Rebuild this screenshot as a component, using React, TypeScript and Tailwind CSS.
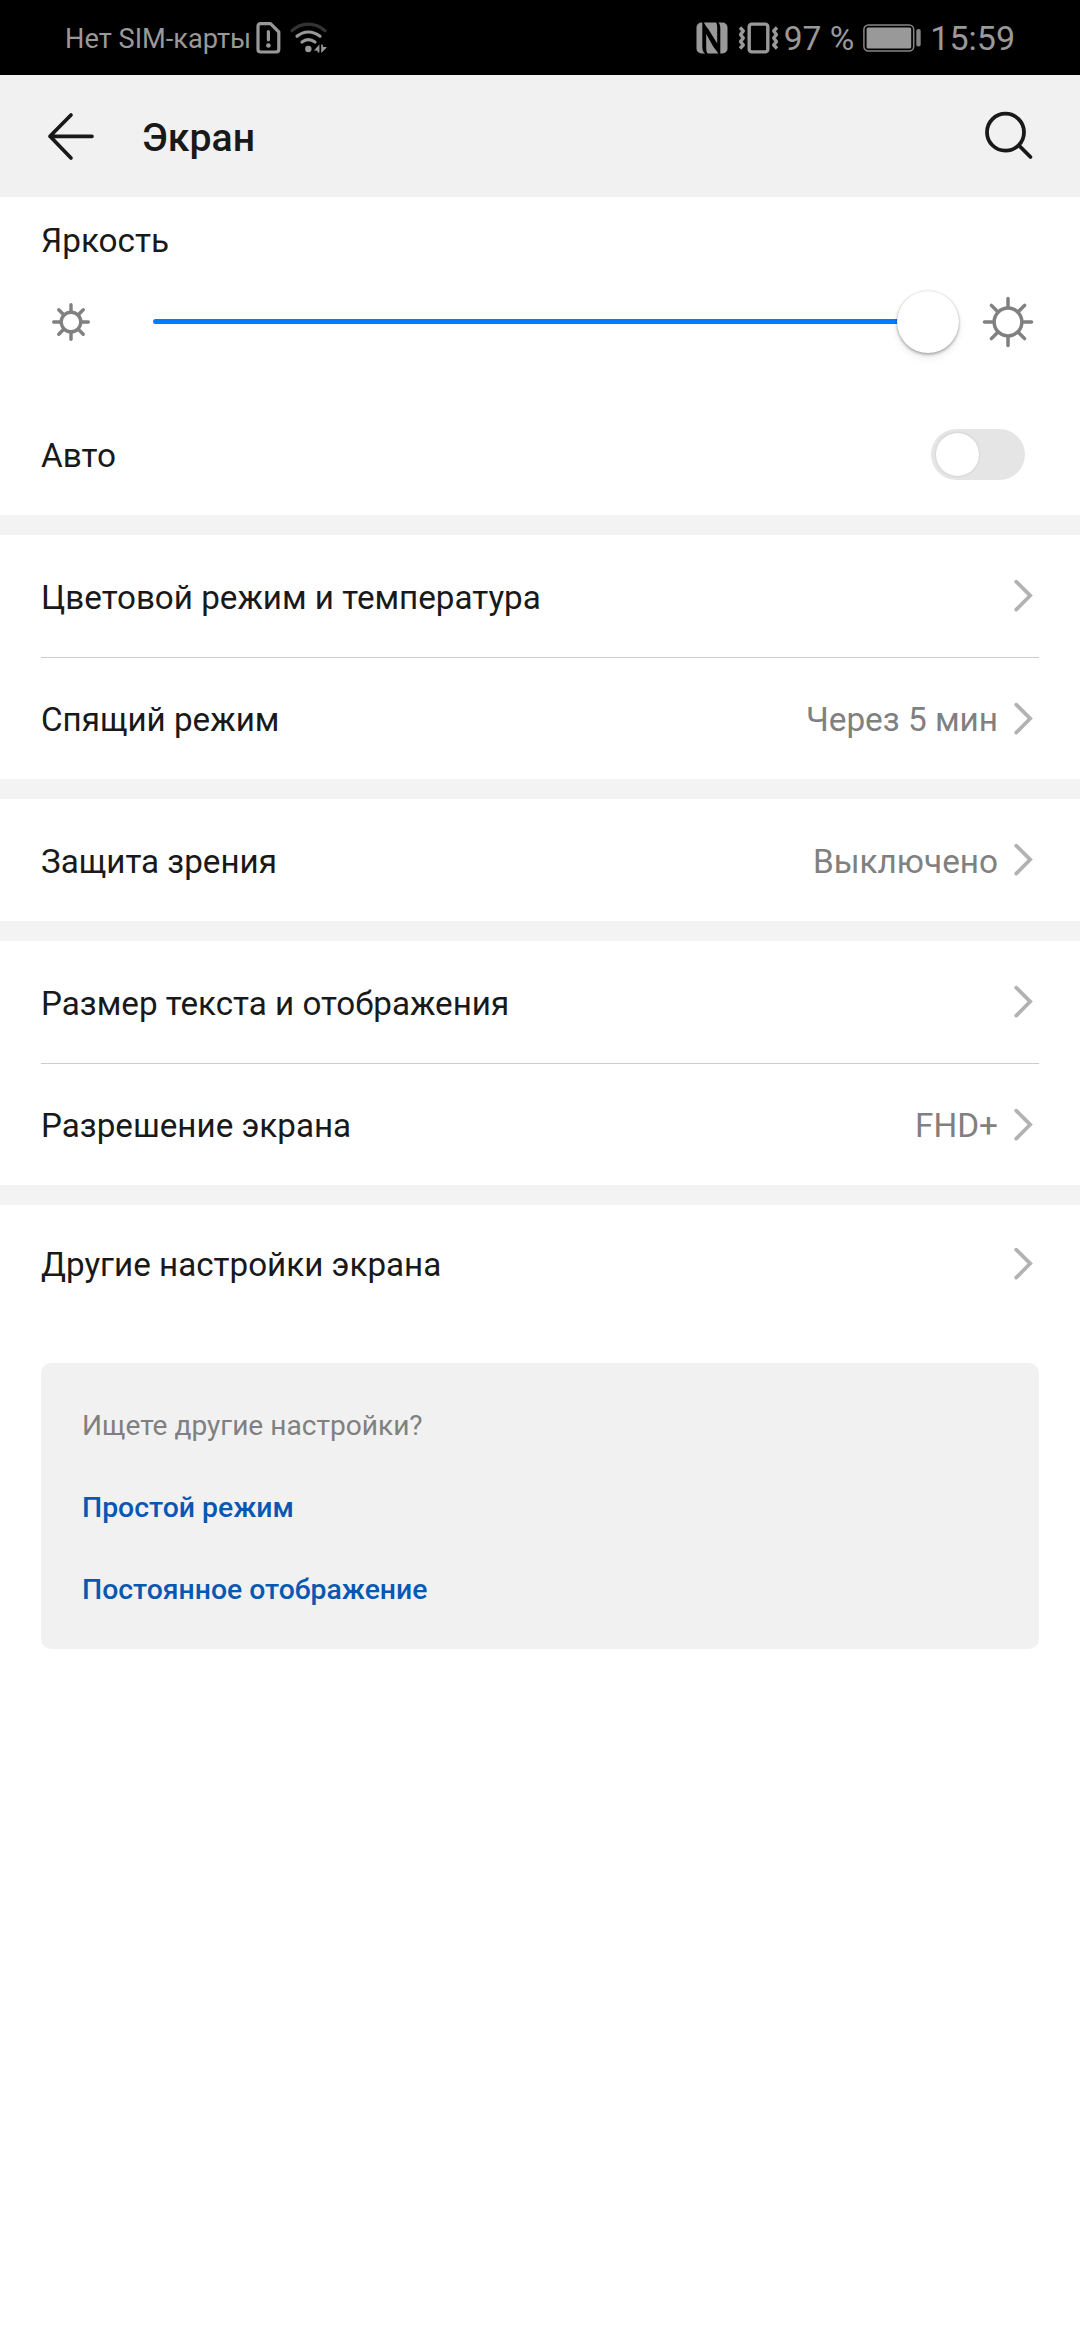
import { useState } from 'react';

interface SettingItem {
  title: string;
  value?: string;
}

interface SunProps {
  size: number;
  radius: number;
  rayStart: number;
  rayEnd: number;
  strokeWidth: number;
}

const groups: SettingItem[][] = [
  [{ title: 'Цветовой режим и температура' }, { title: 'Спящий режим', value: 'Через 5 мин' }],
  [{ title: 'Защита зрения', value: 'Выключено' }],
  [{ title: 'Размер текста и отображения' }, { title: 'Разрешение экрана', value: 'FHD+' }],
];

const links = ['Простой режим', 'Постоянное отображение'];

function SimIcon() {
  return (
    <svg width="26" height="32" viewBox="0 0 26 32" fill="none" stroke="#999" strokeLinecap="round">
      <path d="M4 1.7H14.5L22.8 10V27.3Q22.8 30 20.2 30H4.6Q2 30 2 27.3V4.3Q2 1.7 4.6 1.7Z" strokeWidth="3.2" strokeLinejoin="round" />
      <path d="M12.4 9.6V17.8" strokeWidth="3.2" />
      <circle cx="12.4" cy="23.5" r="2.3" fill="#999" stroke="none" />
    </svg>
  );
}

function WifiIcon() {
  return (
    <svg width="38" height="32" viewBox="0 0 38 32" fill="none" strokeWidth="3.2" strokeLinecap="round">
      <path d="M2 8.7Q9 2.2 18.3 2.2T35 8.7" stroke="#333" />
      <path d="M7 14.3Q12 10 18.3 10T30 14.3" stroke="#999" />
      <path d="M12 20Q15 17.6 18.3 17.6T25 20" stroke="#999" />
      <circle cx="18.3" cy="27" r="3.2" fill="#999" />
      <path d="M29.4 22.4V30.6H27.6V28.8L24 28.4Z" fill="#999" />
      <path d="M31.2 31V22.6H32.8V24.8L37 25.2Z" fill="#999" />
    </svg>
  );
}

function NfcIcon() {
  return (
    <svg width="32" height="32" viewBox="0 0 32 32">
      <rect x="0.5" y="0.5" width="31" height="31" rx="5" fill="#999" />
      <path d="M6.3 0L7.6 0C9 3 10.8 5 12.6 7.5L21.2 21.5V6C21.2 3.5 20.8 1.8 20 0H22.2C23.8 1.8 24.3 3.8 24.3 6.3V32H22.6C20.5 28.8 18.3 26.3 16.6 23.6L10.2 12V25.5C10.2 28 10.5 30 11.8 32H9.3C7.2 30 6.3 28 6.3 25Z" fill="#000" />
    </svg>
  );
}

function VibrateIcon() {
  return (
    <svg width="42" height="32" viewBox="0 0 42 32" fill="none" stroke="#999" strokeWidth="3.4" strokeLinejoin="round">
      <rect x="11.2" y="2.1" width="18.6" height="27.8" rx="2.5" />
      <path d="M2 5.5L5.3 9L2.6 12.6L5.3 16L2.6 19.6L5.3 23L2 26.5" />
      <path d="M39 5.5L35.7 9L38.4 12.6L35.7 16L38.4 19.6L35.7 23L39 26.5" />
    </svg>
  );
}

function BatteryIcon() {
  return (
    <svg width="58" height="28" viewBox="0 0 58 28">
      <rect x="0.9" y="0.9" width="49.8" height="26.2" rx="4.5" fill="none" stroke="#858585" strokeWidth="1.5" />
      <rect x="3.6" y="3.4" width="44.6" height="21.2" rx="1.5" fill="#999" />
      <rect x="53.3" y="5" width="4.4" height="17.4" rx="2" fill="#858585" />
    </svg>
  );
}

function SunIcon({ size, radius, rayStart, rayEnd, strokeWidth }: SunProps) {
  const half = size / 2;
  return (
    <svg
      width={size}
      height={size}
      viewBox={`${-half} ${-half} ${size} ${size}`}
      fill="none"
      stroke="#808080"
      strokeWidth={strokeWidth}
      strokeLinecap="round"
    >
      <circle r={radius} />
      {[0, 45, 90, 135, 180, 225, 270, 315].map((angle) => (
        <path key={angle} d={`M0 ${-rayStart}V${-rayEnd}`} transform={`rotate(${angle})`} />
      ))}
    </svg>
  );
}

function SettingRow({ title, value }: SettingItem) {
  return (
    <button type="button" className="flex h-full w-full items-center text-left">
      <span className="flex-1 pt-[3px] text-[33.2px] leading-10">{title}</span>
      {value && <span className="pt-[3px] text-[33.3px] leading-10 text-[#808080]">{value}</span>}
      <svg className="mr-1 ml-[13px]" width="24" height="36" viewBox="0 0 24 36" fill="none" stroke="#b2b2b2" strokeWidth="3.7" strokeLinecap="round">
        <path d="M5.2 3.6L19.2 17.6L5.2 31.6" />
      </svg>
    </button>
  );
}

export default function App() {
  const [auto, setAuto] = useState(false);

  return (
    <div className="min-h-[2340px] w-[1080px] bg-white font-[Roboto,sans-serif] text-[#191919]">
      <div className="flex h-[75px] items-center bg-black px-[65px] text-[#999]">
        <span className="pt-[3px] text-[27.2px] leading-8">Нет SIM-карты</span>
        <div className="ml-[5px] flex gap-2">
          <SimIcon />
          <WifiIcon />
        </div>
        <div className="ml-auto flex items-center">
          <NfcIcon />
          <div className="ml-2.5">
            <VibrateIcon />
          </div>
          <span className="ml-1 pt-0.5 text-[33.6px] leading-10">97 %</span>
          <div className="mx-[9px]">
            <BatteryIcon />
          </div>
          <span className="text-[34px] leading-10">15:59</span>
        </div>
      </div>

      <header className="flex h-[122px] items-center bg-[#f1f1f1] pr-[45px] pl-[46px]">
        <button type="button" aria-label="Назад">
          <svg width="50" height="50" viewBox="0 0 50 50" fill="none" stroke="#191919" strokeWidth="3.7" strokeLinecap="round" strokeLinejoin="round">
            <path d="M25 4L4 25.3L25 47M4 25.3H46" />
          </svg>
        </button>
        <h1 className="ml-[46px] flex-1 pt-[3px] text-[39.2px] leading-[46px] font-medium">Экран</h1>
        <button type="button" aria-label="Поиск">
          <svg width="50" height="50" viewBox="0 0 50 50" fill="none" stroke="#191919" strokeWidth="3.8" strokeLinecap="round">
            <circle cx="20.5" cy="21.2" r="18.5" />
            <path d="M34 34.5L45.5 46" />
          </svg>
        </button>
      </header>

      <section className="h-[318px] px-[41px]">
        <h2 className="pt-6 text-[33.3px] leading-10">Яркость</h2>
        <div className="mt-[29px] flex h-[63px] items-center">
          <div className="ml-[10px]">
            <SunIcon size={40} radius={9.8} rayStart={11} rayEnd={17.3} strokeWidth={3.4} />
          </div>
          <div className="ml-[62px] flex w-[806px] items-center">
            <div className="-mr-1 h-[5px] flex-1 rounded-full bg-[#007dff]" />
            <div className="size-[62px] rounded-full bg-white shadow-[0_2px_3px_rgba(0,0,0,0.25),0_0_2px_rgba(0,0,0,0.22),0_5px_10px_rgba(0,0,0,0.07)]" />
          </div>
          <div className="ml-[22px]">
            <SunIcon size={54} radius={13.9} rayStart={15.5} rayEnd={23.5} strokeWidth={3.5} />
          </div>
        </div>
        <div className="mt-[41px] flex h-[121px] items-center justify-between pr-[14px]">
          <span className="pt-[2px] text-[33.3px] leading-10">Авто</span>
          <button
            type="button"
            role="switch"
            aria-checked={auto}
            aria-label="Авто"
            onClick={() => setAuto(!auto)}
            className={`flex h-[51px] w-[94px] items-center rounded-full px-[5px] ${auto ? 'justify-end bg-[#007dff]' : 'bg-[#e5e5e5]'}`}
          >
            <span className="size-[43px] rounded-full bg-white shadow-[0_0_2px_1px_rgba(0,0,0,0.07)]" />
          </button>
        </div>
      </section>

      {groups.map((items) => (
        <section key={items[0].title} className="border-t-20 border-[#f3f3f3] px-[41px]">
          {items.map((item, index) => (
            <div key={item.title} className={index > 0 ? 'h-[122px] border-t border-[#ccc]' : 'h-[122px]'}>
              <SettingRow {...item} />
            </div>
          ))}
        </section>
      ))}

      <section className="h-[137px] border-t-20 border-[#f3f3f3] px-[41px]">
        <SettingRow title="Другие настройки экрана" />
      </section>

      <aside className="mx-[41px] mt-[41px] h-[286px] rounded-[10px] bg-[#f1f1f1] px-[41px] pt-[42px]">
        <p className="text-[28.1px] leading-[41px] text-[#808080]">Ищете другие настройки?</p>
        {links.map((link) => (
          <a key={link} href="#" className="mt-[41px] block text-[28.4px] leading-[41px] font-medium text-[#0658b3]">
            {link}
          </a>
        ))}
      </aside>
    </div>
  );
}
